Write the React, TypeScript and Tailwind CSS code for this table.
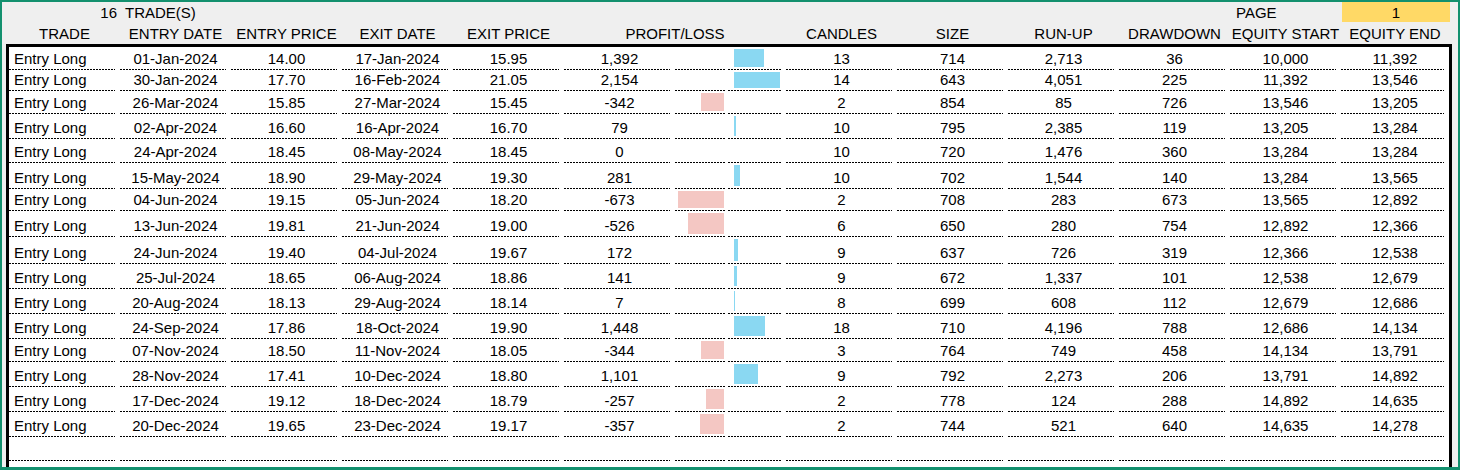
import React from "react";

type Row = {
  entry: string;
  ep: string;
  exit: string;
  xp: string;
  pl: number;
  candles: string;
  size: string;
  runup: string;
  dd: string;
  es: string;
  ee: string;
};

const rows: Row[] = [
  { entry: "01-Jan-2024", ep: "14.00", exit: "17-Jan-2024", xp: "15.95", pl: 1392, candles: "13", size: "714", runup: "2,713", dd: "36", es: "10,000", ee: "11,392" },
  { entry: "30-Jan-2024", ep: "17.70", exit: "16-Feb-2024", xp: "21.05", pl: 2154, candles: "14", size: "643", runup: "4,051", dd: "225", es: "11,392", ee: "13,546" },
  { entry: "26-Mar-2024", ep: "15.85", exit: "27-Mar-2024", xp: "15.45", pl: -342, candles: "2", size: "854", runup: "85", dd: "726", es: "13,546", ee: "13,205" },
  { entry: "02-Apr-2024", ep: "16.60", exit: "16-Apr-2024", xp: "16.70", pl: 79, candles: "10", size: "795", runup: "2,385", dd: "119", es: "13,205", ee: "13,284" },
  { entry: "24-Apr-2024", ep: "18.45", exit: "08-May-2024", xp: "18.45", pl: 0, candles: "10", size: "720", runup: "1,476", dd: "360", es: "13,284", ee: "13,284" },
  { entry: "15-May-2024", ep: "18.90", exit: "29-May-2024", xp: "19.30", pl: 281, candles: "10", size: "702", runup: "1,544", dd: "140", es: "13,284", ee: "13,565" },
  { entry: "04-Jun-2024", ep: "19.15", exit: "05-Jun-2024", xp: "18.20", pl: -673, candles: "2", size: "708", runup: "283", dd: "673", es: "13,565", ee: "12,892" },
  { entry: "13-Jun-2024", ep: "19.81", exit: "21-Jun-2024", xp: "19.00", pl: -526, candles: "6", size: "650", runup: "280", dd: "754", es: "12,892", ee: "12,366" },
  { entry: "24-Jun-2024", ep: "19.40", exit: "04-Jul-2024", xp: "19.67", pl: 172, candles: "9", size: "637", runup: "726", dd: "319", es: "12,366", ee: "12,538" },
  { entry: "25-Jul-2024", ep: "18.65", exit: "06-Aug-2024", xp: "18.86", pl: 141, candles: "9", size: "672", runup: "1,337", dd: "101", es: "12,538", ee: "12,679" },
  { entry: "20-Aug-2024", ep: "18.13", exit: "29-Aug-2024", xp: "18.14", pl: 7, candles: "8", size: "699", runup: "608", dd: "112", es: "12,679", ee: "12,686" },
  { entry: "24-Sep-2024", ep: "17.86", exit: "18-Oct-2024", xp: "19.90", pl: 1448, candles: "18", size: "710", runup: "4,196", dd: "788", es: "12,686", ee: "14,134" },
  { entry: "07-Nov-2024", ep: "18.50", exit: "11-Nov-2024", xp: "18.05", pl: -344, candles: "3", size: "764", runup: "749", dd: "458", es: "14,134", ee: "13,791" },
  { entry: "28-Nov-2024", ep: "17.41", exit: "10-Dec-2024", xp: "18.80", pl: 1101, candles: "9", size: "792", runup: "2,273", dd: "206", es: "13,791", ee: "14,892" },
  { entry: "17-Dec-2024", ep: "19.12", exit: "18-Dec-2024", xp: "18.79", pl: -257, candles: "2", size: "778", runup: "124", dd: "288", es: "14,892", ee: "14,635" },
  { entry: "20-Dec-2024", ep: "19.65", exit: "23-Dec-2024", xp: "19.17", pl: -357, candles: "2", size: "744", runup: "521", dd: "640", es: "14,635", ee: "14,278" },
];

const heights = [23, 21, 23, 25, 24, 26, 22, 26, 27, 25, 25, 25, 23, 25, 25, 25];
const emptyHeights = [24, 24];

const fmt = (n: number) => n.toLocaleString("en-US");

const Line = ({ className = "" }: { className?: string }) => (
  <div
    className={
      "h-px shrink-0 bg-[image:repeating-linear-gradient(90deg,#000_0_2px,transparent_2px_3px)] " +
      className
    }
  />
);

const Cell = ({
  children,
  align = "center",
}: {
  children?: React.ReactNode;
  align?: "center" | "left";
}) => (
  <div className="flex h-full flex-col">
    <div
      className={
        "flex flex-1 items-end pb-[2px] whitespace-nowrap " +
        (align === "left" ? "justify-start pl-[5px]" : "justify-center")
      }
    >
      {children}
    </div>
    <Line className="mr-[5px]" />
  </div>
);

const BarCell = ({ v }: { v?: number }) => {
  const neg = v !== undefined && v < 0 ? (Math.abs(v) / 673) * 46 : 0;
  const pos = v !== undefined && v > 0 ? (v / 2154) * 46 : 0;
  return (
    <div className="flex h-full flex-col">
      <div className="flex flex-1 items-stretch py-[2px]">
        <div className="flex w-[49px] justify-end">
          {neg > 0 && <div className="bg-[#f4c7c3]" style={{ width: `${neg}px` }} />}
        </div>
        <div className="w-[10px]" />
        <div className="flex flex-1 justify-start">
          {pos > 0 && <div className="bg-[#8ad8f2]" style={{ width: `${Math.max(pos, 1)}px` }} />}
        </div>
      </div>
      <div className="flex">
        <Line className="w-[51px]" />
        <Line className="ml-[2px] w-[53px]" />
      </div>
    </div>
  );
};

const gridCols = "grid grid-cols-[repeat(12,111px)_108px]";

export default function App() {
  return (
    <div className="h-[470px] w-[1460px] overflow-hidden border-2 border-b-[3px] border-[#13906e] bg-[#efefef] font-['Liberation_Sans',Arial,sans-serif] text-[15px] leading-[17px] text-black">
      {/* header row A */}
      <div className={gridCols + " h-[21px] pl-[7px]"}>
        <div className="flex items-end justify-end pr-[3px] pb-[2px]">16</div>
        <div className="flex items-end pl-[5px] pb-[2px]">TRADE(S)</div>
        <div className="col-span-9" />
        <div className="flex items-end pl-[6px] pb-[2px]">PAGE</div>
        <div className="ml-[1px] flex h-[20px] w-[108px] items-end justify-center bg-[#ffd966] pb-[1px]">
          1
        </div>
      </div>
      {/* header row B */}
      <div className={gridCols + " h-[21px] pl-[7px]"}>
        {[
          "TRADE",
          "ENTRY DATE",
          "ENTRY PRICE",
          "EXIT DATE",
          "EXIT PRICE",
        ].map((h) => (
          <div key={h} className="flex items-end justify-center whitespace-nowrap pb-[2px]">
            {h}
          </div>
        ))}
        <div className="col-span-2 flex items-end justify-center pb-[2px]">PROFIT/LOSS</div>
        {["CANDLES", "SIZE", "RUN-UP", "DRAWDOWN", "EQUITY START", "EQUITY END"].map((h) => (
          <div key={h} className="flex items-end justify-center whitespace-nowrap pb-[2px]">
            {h}
          </div>
        ))}
      </div>
      {/* table */}
      <div className="ml-[4px] mr-[6px] border-[3px] border-b-0 border-black bg-white">
        {rows.map((r, i) => (
          <div key={i} className={gridCols} style={{ height: `${heights[i]}px` }}>
            <Cell align="left">Entry Long</Cell>
            <Cell>{r.entry}</Cell>
            <Cell>{r.ep}</Cell>
            <Cell>{r.exit}</Cell>
            <Cell>{r.xp}</Cell>
            <Cell>{fmt(r.pl)}</Cell>
            <BarCell v={r.pl} />
            <Cell>{r.candles}</Cell>
            <Cell>{r.size}</Cell>
            <Cell>{r.runup}</Cell>
            <Cell>{r.dd}</Cell>
            <Cell>{r.es}</Cell>
            <Cell>{r.ee}</Cell>
          </div>
        ))}
        {emptyHeights.map((h, i) => (
          <div key={"e" + i} className={gridCols} style={{ height: `${h}px` }}>
            <Cell />
            <Cell />
            <Cell />
            <Cell />
            <Cell />
            <Cell />
            <BarCell />
            <Cell />
            <Cell />
            <Cell />
            <Cell />
            <Cell />
            <Cell />
          </div>
        ))}
      </div>
    </div>
  );
}
